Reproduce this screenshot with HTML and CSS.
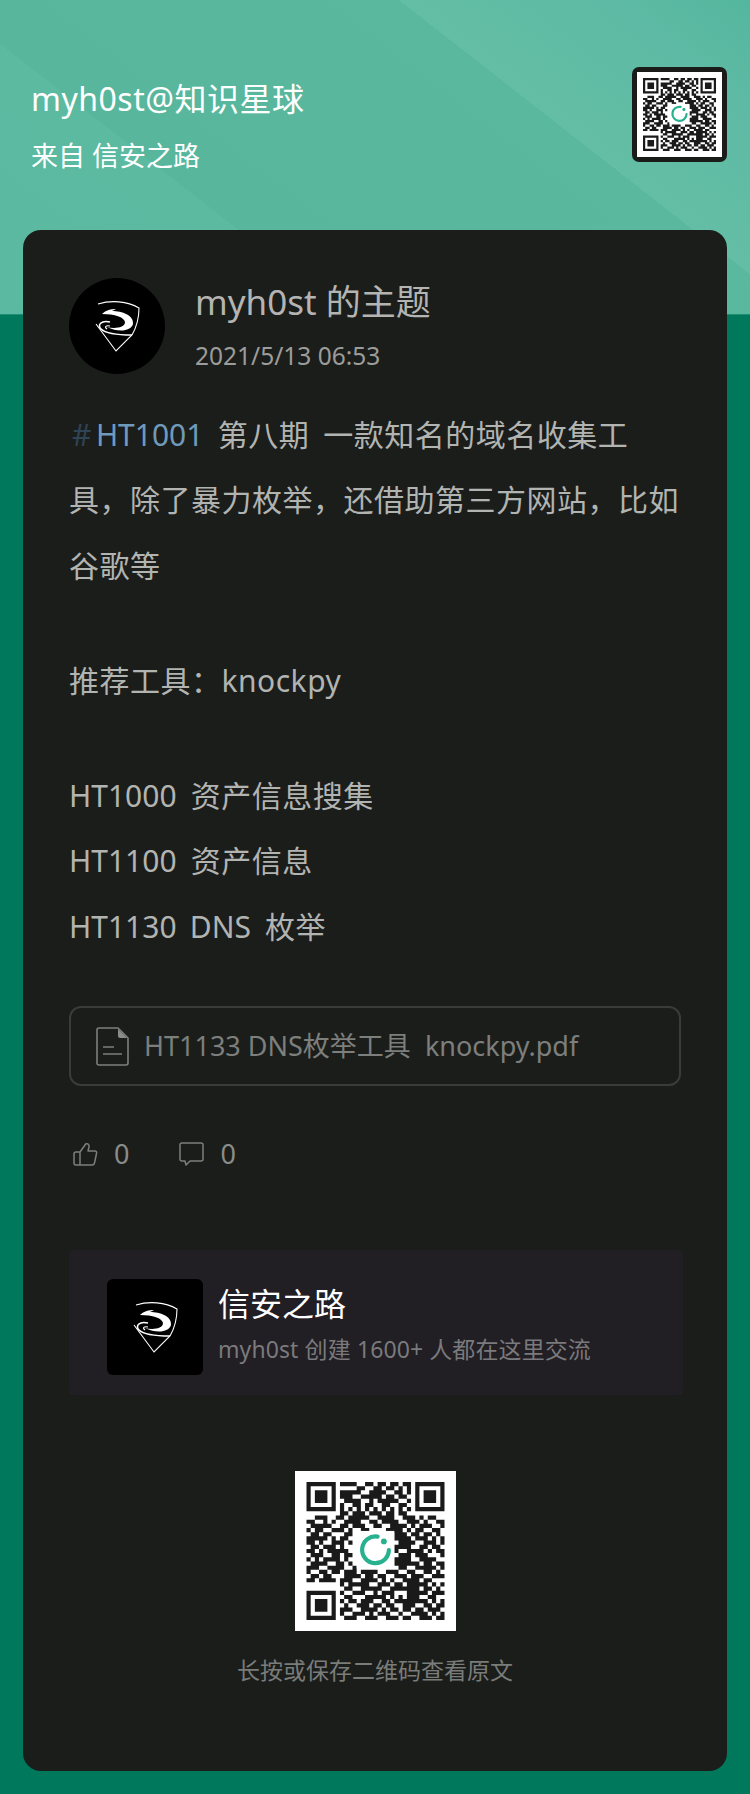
FILE: index.html

```html
<!DOCTYPE html>
<html lang="zh-CN">
<head>
    <meta charset="UTF-8">
    <meta name="viewport" content="width=device-width, initial-scale=1.0">
    <title>myh0st@知识星球</title>
    <link rel="stylesheet" href="styles.css">
</head>
<body>

    <svg class="defs" width="0" height="0">
        <symbol id="logo" viewBox="0 0 96 96">
            <path d="M29 26 C42 22 58 23 70 30 C70 40 67 50 63 57 L47 73 L27 46" fill="none" stroke="#fff" stroke-width="1.1"/>
            <path d="M33 36 C37 32 42 31 47 31 L43 33 C53 33 65 37 64 46 C62 53 50 55 38 49 C45 51 56 50 56 44 C55 39 46 36 33 36Z" fill="#fff"/>
            <path d="M41 44 C32 42 28 47 32 51 C37 56 48 57 63 57" fill="none" stroke="#fff" stroke-width="1.6"/>
            <path d="M41 48 C37 47 35 49 38 51" fill="none" stroke="#fff" stroke-width="1.1"/>
        </symbol>
        <symbol id="qr" viewBox="0 0 33 33">
            <path class="qr-modules" fill="#1a1a1a"/>
            <rect x="12" y="11.700" width="9" height="9" fill="#fff"/>
            <path d="M17 13.050 A3.200 3.200 0 1 0 19.700 16.300" fill="none" stroke="#27b18f" stroke-width="1" stroke-linecap="round"/>
            <circle cx="18.500" cy="14.200" r="0.700" fill="#27b18f"/>
        </symbol>
    </svg>

    <header class="top">
        <div>
            <div class="top-title">myh0st@知识星球</div>
            <div class="top-sub">来自 信安之路</div>
        </div>
        <div class="top-qr">
            <svg class="qr-small"><use href="#qr"/></svg>
        </div>
    </header>

    <main class="card">
        <div class="author">
            <svg class="avatar"><use href="#logo"/></svg>
            <div>
                <div class="author-name">myh0st 的主题</div>
                <div class="author-date">2021/5/13 06:53</div>
            </div>
        </div>

        <p class="post first"><span class="tag-hash">#</span><span class="tag">HT1001</span>  第八期  一款知名的域名收集工具，除了暴力枚举，还借助第三方网站，比如谷歌等</p>
        <p class="post">推荐工具：knockpy</p>
        <p class="post"><span class="en">HT1000</span>  资产信息搜集<br><span class="en">HT1100</span>  资产信息<br><span class="en">HT1130  DNS</span>  枚举</p>

        <div class="file">
            <svg class="file-icon" viewBox="0 0 33 39">
                <path d="M3 1 H22 L32 11 V36 Q32 38 30 38 H3 Q1 38 1 36 V3 Q1 1 3 1Z" fill="none" stroke="#7d7f7d" stroke-width="1.6"/>
                <path d="M22 2 L31 11 H24 Q22 11 22 9Z" fill="#8a8c8a"/>
                <path d="M7 20 H18 M7 27 H26" fill="none" stroke="#7d7f7d" stroke-width="1.6"/>
            </svg>
            <span class="file-name">HT1133 DNS枚举工具  knockpy.pdf</span>
        </div>

        <div class="actions">
            <div class="action">
                <svg class="action-icon" viewBox="0 0 25 24">
                    <path d="M7 10 L12 3 Q13 1 15 2 Q16.500 3 16 5 L15 9 H22 Q24 9 23.500 11.500 L21.500 21 Q21 23 19 23 H3 Q1 23 1 21 V12 Q1 10 3 10 H7 V23" fill="none" stroke="#7d7f7d" stroke-width="1.5" stroke-linejoin="round"/>
                </svg>
                <span>0</span>
            </div>
            <div class="action">
                <svg class="action-icon" viewBox="0 0 25 24">
                    <path d="M3 1 H22 Q24 1 24 3 V17 Q24 19 22 19 H11 L7 23 L6 19 H3 Q1 19 1 17 V3 Q1 1 3 1Z" fill="none" stroke="#7d7f7d" stroke-width="1.5" stroke-linejoin="round"/>
                </svg>
                <span>0</span>
            </div>
        </div>

        <div class="group">
            <svg class="group-logo"><use href="#logo"/></svg>
            <div>
                <div class="group-name">信安之路</div>
                <div class="group-info">myh0st 创建 1600+ 人都在这里交流</div>
            </div>
        </div>

        <div class="qr-box">
            <svg class="qr-big"><use href="#qr"/></svg>
        </div>
        <div class="qr-tip">长按或保存二维码查看原文</div>
    </main>

    <script src="script.js"></script>
</body>
</html>
```

FILE: styles.css

```css
* {
    margin: 0;
    padding: 0;
    box-sizing: border-box;
    font-family: "Noto Sans", "Noto Sans CJK SC", sans-serif;
}
body {
    width: 750px;
    height: 1794px;
    background-color: #00785c;
    overflow: hidden;
}
.defs {
    position: absolute;
}
/* Header */
.top {
    height: 315px;
    padding: 67px 23px 0 31px;
    display: flex;
    justify-content: space-between;
    align-items: flex-start;
    background-image: linear-gradient(38deg, #5ab9a0 0, #5bbaa0 213px, #57b69b 213px, #5ab89e 493px, #64bea5 493px, #5ebaa4 620px, #54b69e 712px);
    border-bottom: 1px solid #1f8e74;
    color: #fff;
}
.top-title {
    font-size: 32px;
    line-height: 46px;
    letter-spacing: 0.5px;
    margin-top: 9px;
}
.top-sub {
    font-size: 27px;
    line-height: 38px;
    margin-top: 15px;
}
.top-qr {
    width: 95px;
    height: 95px;
    padding: 5px;
    background: #1a1c1a;
    border-radius: 7px;
}
.qr-small {
    display: block;
    width: 85px;
    height: 85px;
    background: #fff;
    padding: 6px;
}
/* Card */
.card {
    margin: -85px 23px 0;
    height: 1541px;
    padding: 48px 46px 0;
    background: #1b1d1b;
    border-radius: 18px;
    position: relative;
}
.author {
    display: flex;
    align-items: flex-start;
    gap: 30px;
}
.avatar {
    width: 96px;
    height: 96px;
    border-radius: 50%;
    background: #000;
}
.author-name {
    font-size: 35px;
    line-height: 46px;
    color: #b4b4b2;
    margin-top: 1px;
}
.author-date {
    font-size: 24.500px;
    line-height: 34px;
    color: #9c9c9a;
    margin-top: 14px;
}
.post {
    font-size: 30px;
    line-height: 65.300px;
    letter-spacing: 0.5px;
    word-spacing: -1.200px;
    color: #b2b4b2;
    white-space: pre-wrap;
    margin-bottom: 50px;
}
.first {
    margin-top: 28px;
}
.en {
    letter-spacing: 0;
}
.tag {
    color: #6f9abb;
    letter-spacing: 0;
}
.tag-hash {
    color: #2f4454;
    margin: 0 4px 0 3px;
}
/* File */
.file {
    width: 612px;
    height: 80px;
    margin-top: -3px;
    padding-left: 25px;
    display: flex;
    align-items: center;
    gap: 15px;
    border: 2px solid #3a3c3a;
    border-radius: 12px;
    font-size: 27px;
    color: #7d7f7d;
    white-space: pre;
}
.file-icon {
    width: 33px;
    height: 39px;
}
.file-name {
    margin-bottom: 4px;
}
/* Likes and comments */
.actions {
    display: flex;
    gap: 50px;
    margin-top: 51px;
    padding-left: 4px;
}
.action {
    display: flex;
    align-items: center;
    gap: 16px;
    font-size: 27px;
    line-height: 34px;
    color: #8a8c8a;
}
.action-icon {
    width: 25px;
    height: 24px;
}
/* Group */
.group {
    width: 614px;
    height: 145px;
    margin-top: 79px;
    padding: 29px 38px 0;
    display: flex;
    gap: 15px;
    background: #211e24;
    border-radius: 4px;
}
.group-logo {
    width: 96px;
    height: 96px;
    background: #000;
    border-radius: 6px;
}
.group-name {
    font-size: 32px;
    line-height: 46px;
    color: #fff;
    margin-top: 2px;
}
.group-info {
    font-size: 23px;
    line-height: 34px;
    letter-spacing: 0.1px;
    color: #7a7a7c;
    margin-top: 5px;
}
/* Bottom QR */
.qr-box {
    margin-top: 76px;
    display: flex;
    justify-content: center;
}
.qr-big {
    width: 161px;
    height: 160px;
    padding: 11px;
    background: #fff;
}
.qr-tip {
    margin-top: 22px;
    text-align: center;
    font-size: 23px;
    line-height: 34px;
    color: #7a7c7a;
}
```

FILE: script.js

```js
// QR modules, one string per row
var rows = [
    "111111101111001101101101101111111",
    "100000100000110011011010101000001",
    "101110101111100111100110101011101",
    "101110101110011111011011001011101",
    "101110100111100101111100101011101",
    "100000101001101100110011001000001",
    "111111101010101010101010101111111",
    "000000001101110111011011000000000",
    "001110011011111001111001110101100",
    "110010100111100110111100111010011",
    "011111001101110011001111010111001",
    "101100111010011000011110101100110",
    "011011000110000000000111011011010",
    "111110101100000000000111101110101",
    "110100111010000000000011110011101",
    "011011101000000000000111100110110",
    "110101111100000000000100111101011",
    "011100110110000000000011101110001",
    "101011110100000000000111100111100",
    "011110011010000000000111111011011",
    "111001111001000000000011001111101",
    "100110110111011110011100110011010",
    "011011000111101101100111011100111",
    "110111101110011110101001111011000",
    "000000001011111001110110111110101",
    "000000000110011111001111111011010",
    "111111101001110010111000111110111",
    "100000100110001111101010111001100",
    "101110101011011100110111111110101",
    "101110100100111011011001110011011",
    "101110101110011110101101101101110",
    "100000101001110101110010011110101",
    "111111100111001110011101100111011"
];

var d = "";
rows.forEach(function (row, y) {
    for (var x = 0; x < row.length; x++) {
        if (row[x] === "1") {
            d += "M" + x + " " + y + "h1v1h-1z";
        }
    }
});

document.querySelectorAll(".qr-modules").forEach(function (path) {
    path.setAttribute("d", d);
});
```
